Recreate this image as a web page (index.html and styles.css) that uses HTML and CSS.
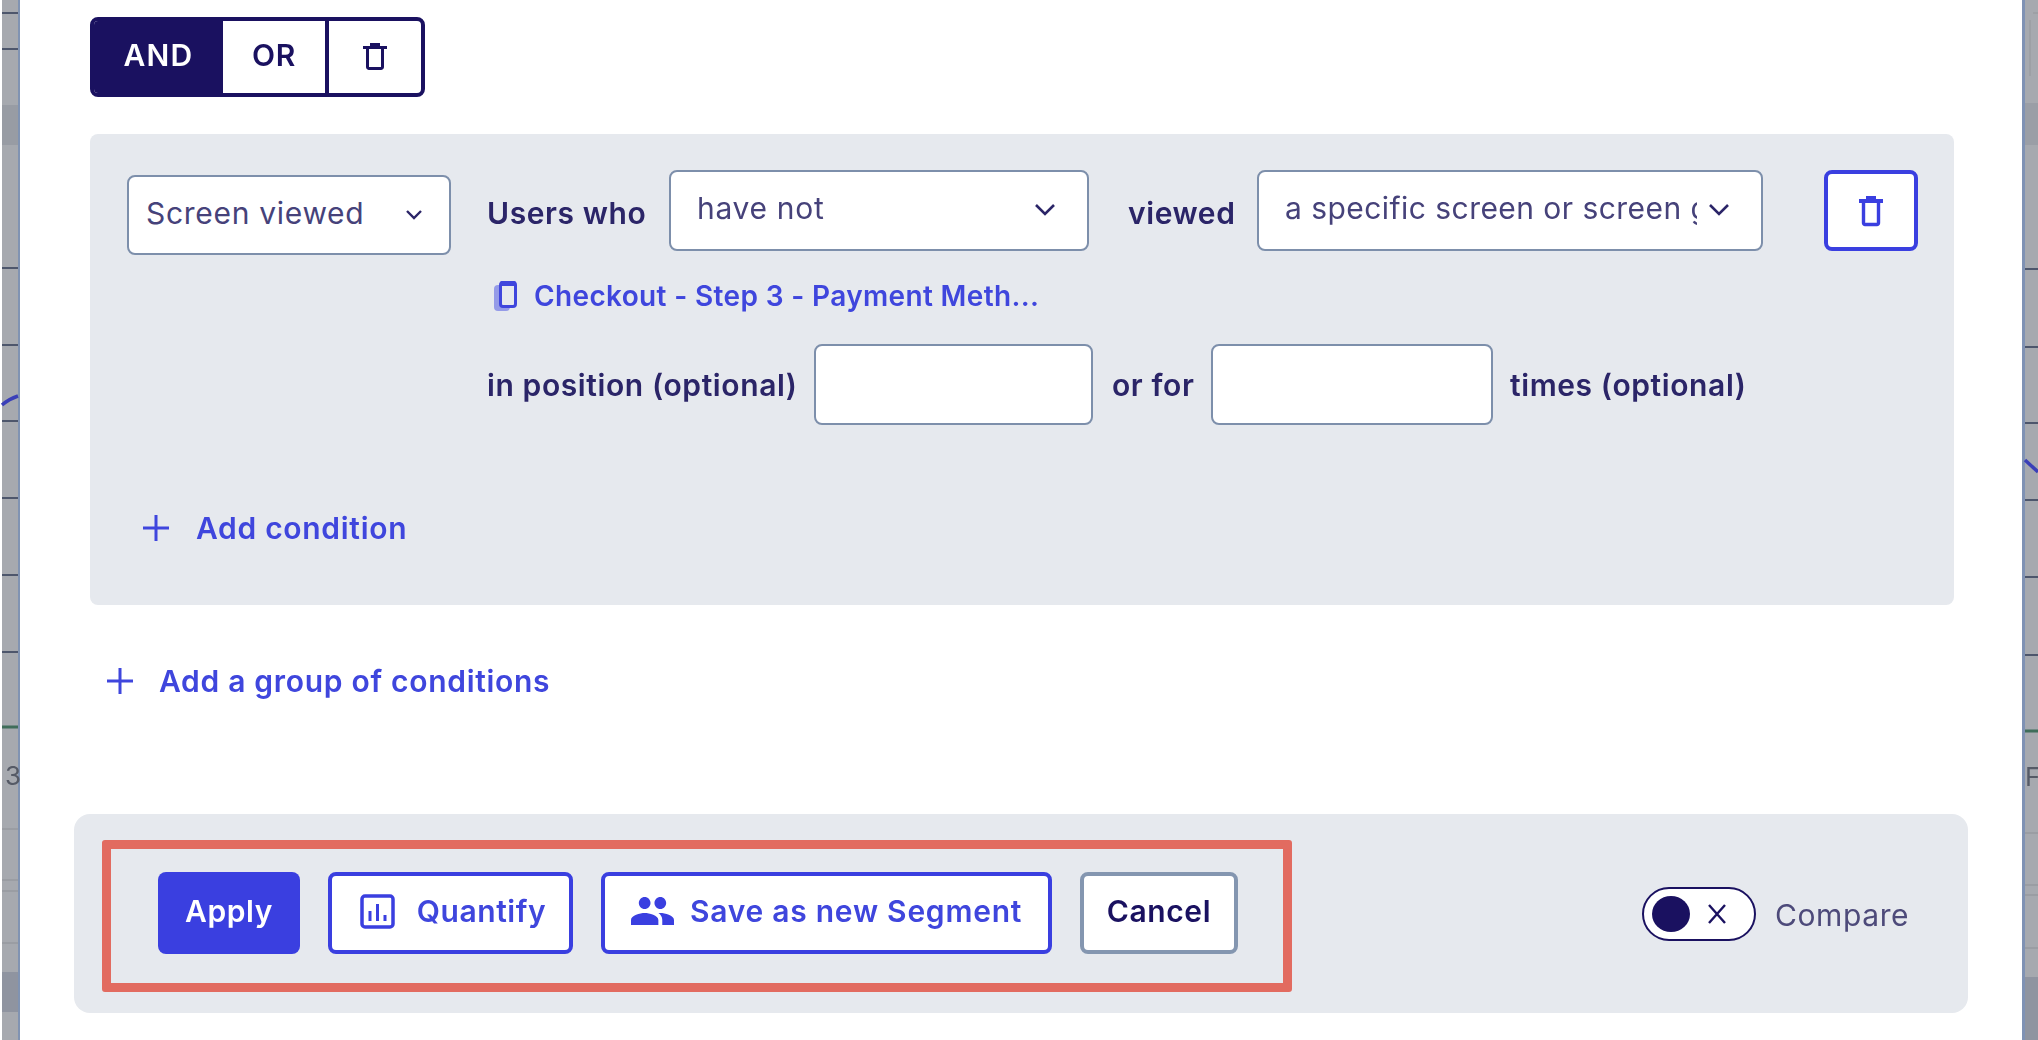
FILE: index.html
```html
<!DOCTYPE html>
<html lang="en">
<head>
<meta charset="utf-8">
<title>Segment builder</title>
<link rel="stylesheet" href="styles.css">
</head>
<body>
<div class="page">
  <svg class="strip strip-left" viewBox="0 0 20 1040" aria-hidden="true">
    <rect x="2" width="16" height="1040" fill="#a6a9af"/>
    <rect x="2" y="105" width="16" height="40" fill="#989ca4"/>
    <rect x="2" y="972" width="16" height="40" fill="#8f94a0"/>
    <rect x="18" width="2" height="1040" fill="#8093b2"/>
    <g stroke="#4d566c" stroke-width="2">
      <path d="M2 13H18M2 49H18M2 268H18M2 345H18M2 421H18M2 498H18M2 575H18M2 652H18"/>
    </g>
    <path d="M2 405Q9 399 18 396" stroke="#3a3fb8" stroke-width="3.5" fill="none"/>
    <path d="M2 727H18" stroke="#3f6d5a" stroke-width="3"/>
    <path d="M2 829H18M2 880H18M2 891H18M2 943H18" stroke="#8e9197" stroke-width="1"/>
    <text x="5" y="785" class="strip-text">3</text>
  </svg>

  <main class="modal">
    <div class="logic">
      <span class="logic-item logic-on">AND</span>
      <span class="logic-item logic-or">OR</span>
      <span class="logic-item logic-del">
        <svg class="trash-s" viewBox="0 0 24 28"><path d="M7 1h10v3H7zM0 4h24v3H0z" fill="#1a1160"/><path d="M4.5 7v18a1.5 1.5 0 0 0 1.5 1.5h12a1.5 1.5 0 0 0 1.5-1.5V7" fill="none" stroke="#1a1160" stroke-width="3"/></svg>
      </span>
    </div>

    <section class="group">
      <div class="cond">
        <div class="sel sel-type">
          <span class="sel-text">Screen viewed</span>
          <svg class="chev-s" viewBox="0 0 18 12"><path d="M2 2l7 7 7-7" fill="none" stroke="#2b2568" stroke-width="2.4"/></svg>
        </div>
        <div class="cond-main">
          <div class="row row-top">
            <span class="label l-users">Users who</span>
            <div class="sel sel-have">
              <span class="sel-text">have not</span>
              <svg class="chev" viewBox="0 0 22 14"><path d="M2 2l9 9 9-9" fill="none" stroke="#2b2568" stroke-width="2.6"/></svg>
            </div>
            <span class="label l-viewed">viewed</span>
            <div class="sel sel-what">
              <span class="sel-text clip">a specific screen or screen group</span>
              <svg class="chev" viewBox="0 0 22 14"><path d="M2 2l9 9 9-9" fill="none" stroke="#2b2568" stroke-width="2.6"/></svg>
            </div>
            <button class="del-btn" aria-label="Delete">
              <svg class="trash" viewBox="0 0 24 32"><path d="M7 1h10v3H7zM0 4h24v4H0z" fill="#3a3fe0"/><path d="M4.5 8v20a1.5 1.5 0 0 0 1.5 1.5h12a1.5 1.5 0 0 0 1.5-1.5V8" fill="none" stroke="#3a3fe0" stroke-width="3.4"/></svg>
            </button>
          </div>
          <div class="screen-link">
            <svg class="phone" viewBox="0 0 23 30"><rect x="0" y="4" width="16" height="26" rx="4" fill="#959be8"/><rect x="6.5" y="1.5" width="15" height="24" rx="2.5" fill="#e6e9ee" stroke="#3f46dd" stroke-width="3"/><rect x="6" y="0" width="16" height="5" rx="2" fill="#3f46dd"/></svg>
            <span>Checkout - Step 3 - Payment Meth...</span>
          </div>
          <div class="row row-pos">
            <span class="label l-pos">in position (optional)</span>
            <div class="field f-pos"></div>
            <span class="label l-orfor">or for</span>
            <div class="field f-times"></div>
            <span class="label l-times">times (optional)</span>
          </div>
        </div>
      </div>
      <a class="add add-cond">
        <svg class="plus" viewBox="0 0 28 28"><path d="M14 1v26M1 14h26" stroke="#3f46dd" stroke-width="3"/></svg>
        <span>Add condition</span>
      </a>
    </section>

    <a class="add add-group">
      <svg class="plus" viewBox="0 0 28 28"><path d="M14 1v26M1 14h26" stroke="#3f46dd" stroke-width="3"/></svg>
      <span>Add a group of conditions</span>
    </a>

    <footer class="footer">
      <div class="actions">
        <button class="btn btn-apply">Apply</button>
        <button class="btn btn-line btn-quant">
          <svg class="ic-chart" viewBox="0 0 35 35"><rect x="2" y="2" width="31" height="31" rx="3" fill="none" stroke="#3a3fe0" stroke-width="3.5"/><path d="M10 17v10M17.5 10v17M25 21v6" stroke="#3a3fe0" stroke-width="3"/></svg>
          <span>Quantify</span>
        </button>
        <button class="btn btn-line btn-save">
          <svg class="ic-people" viewBox="1 5 22 14" preserveAspectRatio="none"><path fill="#3a3fe0" d="M16 11c1.66 0 2.99-1.34 2.99-3S17.66 5 16 5c-1.66 0-3 1.34-3 3s1.34 3 3 3zm-8 0c1.66 0 2.99-1.34 2.99-3S9.66 5 8 5C6.34 5 5 6.34 5 8s1.34 3 3 3zm0 2c-2.33 0-7 1.17-7 3.5V19h14v-2.5c0-2.33-4.67-3.5-7-3.5zm8 0c-.29 0-.62.02-.97.05 1.16.84 1.97 1.97 1.97 3.45V19h6v-2.5c0-2.33-4.67-3.5-7-3.5z"/></svg>
          <span>Save as new Segment</span>
        </button>
        <button class="btn btn-cancel">Cancel</button>
      </div>
      <div class="compare">
        <span class="toggle"><span class="knob"></span><svg class="toggle-x" viewBox="0 0 20 22"><path d="M2 2l16 18M18 2L2 20" fill="none" stroke="#1a1160" stroke-width="2.4"/></svg></span>
        <span class="compare-label">Compare</span>
      </div>
    </footer>
  </main>

  <svg class="strip strip-right" viewBox="0 0 16 1040" aria-hidden="true">
    <rect x="3" width="13" height="1040" fill="#a6a9af"/>
    <rect x="3" y="103" width="13" height="42" fill="#9a9ea6"/>
    <rect x="3" y="977" width="13" height="63" fill="#8f94a0"/>
    <rect width="3" height="1040" fill="#7f92b4"/>
    <path d="M11 13H16M8 20V76" stroke="#9a9da3" stroke-width="1.5" fill="none"/>
    <path d="M3 269H16M3 347H16M3 423H16M3 500H16M3 577H16M3 655H16" stroke="#4d566c" stroke-width="2"/>
    <path d="M3 460L16 472" stroke="#3a3fb8" stroke-width="3.5"/>
    <path d="M3 731H16" stroke="#3f6d5a" stroke-width="3"/>
    <path d="M3 833H16M3 885H16M3 895H16M3 948H16" stroke="#8e9197" stroke-width="1"/>
    <text x="3" y="786" class="strip-text">Fe</text>
  </svg>
</div>
</body>
</html>
```

FILE: styles.css
```css
* { box-sizing: border-box; }
html, body { margin: 0; padding: 0; }
body {
  width: 2038px;
  height: 1040px;
  overflow: hidden;
  background: #fff;
  font-family: "Inter", "Liberation Sans", sans-serif;
  color: #1a1160;
}
.page { display: flex; width: 2038px; height: 1040px; filter: blur(0.7px); }
.strip { display: block; flex: none; height: 1040px; }
.strip-left { width: 20px; }
.strip-right { width: 16px; }
.strip-text { font-size: 26px; fill: #555a66; font-family: "Inter", sans-serif; }

.modal { flex: 1; min-width: 0; background: #fff; padding: 17px 68px 0 70px; }

/* AND / OR */
.logic {
  display: inline-flex;
  vertical-align: top;
  width: 335px;
  height: 80px;
  border: 4px solid #1a1160;
  border-radius: 8px;
  overflow: hidden;
  background: #fff;
  font-size: 30px;
  font-weight: 600;
  letter-spacing: 0.6px;
}
.logic-item { display: flex; align-items: center; justify-content: center; padding-bottom: 5px; }
.logic-on { width: 129px; background: #1a1160; color: #fff; letter-spacing: 1.2px; }
.logic-or { width: 106px; border-right: 4px solid #1a1160; }
.logic-del { flex: 1; padding-bottom: 0; }
.trash-s { width: 24px; height: 28px; margin-top: -2px; }

/* Group panel */
.group {
  height: 471px;
  margin-top: 37px;
  padding: 36px 36px 0 37px;
  background: #e6e9ee;
  border-radius: 8px;
}
.cond { display: flex; gap: 36px; height: 322px; }
.cond-main { flex: 1; min-width: 0; }
.row { display: flex; align-items: center; }
.row-top { height: 81px; }
.label { flex: none; font-size: 30px; font-weight: 600; letter-spacing: 0.6px; color: #2b2568; white-space: nowrap; }

.sel {
  display: flex;
  align-items: center;
  justify-content: space-between;
  background: #fff;
  border: 2px solid #7d8fab;
  border-radius: 8px;
  color: #46427a;
  font-size: 30px;
  letter-spacing: 0.7px;
}
.sel-text { white-space: nowrap; }
.sel-type { flex: none; width: 324px; height: 80px; padding: 0 26px 4px 17px; margin-top: 5px; }
.chev-s { width: 18px; height: 12px; flex: none; margin-top: 4px; }
.chev { width: 22px; height: 14px; flex: none; margin-top: 4px; }
.row-top .label { padding-top: 4px; }
.l-users { width: 182px; }
.sel-have { flex: none; width: 420px; height: 81px; padding: 0 31px 6px 26px; }
.l-viewed { margin-left: 39px; width: 129px; }
.sel-what { flex: none; width: 506px; height: 81px; padding: 0 31px 6px 26px; }
.clip { flex: none; width: 412px; overflow: hidden; letter-spacing: 0.45px; }
.del-btn {
  display: flex;
  align-items: center;
  justify-content: center;
  flex: none;
  width: 94px;
  height: 81px;
  margin-left: 61px;
  padding: 0;
  background: #fff;
  border: 4px solid #3a3fe0;
  border-radius: 8px;
}
.trash { width: 24px; height: 32px; }

.screen-link {
  display: flex;
  align-items: center;
  gap: 17px;
  height: 93px;
  padding: 0 0 3px 7px;
  color: #3f46dd;
  font-size: 28px;
  font-weight: 600;
  letter-spacing: 0.35px;
  white-space: nowrap;
}
.phone { width: 23px; height: 30px; flex: none; }
.row-pos { height: 81px; }
.field { flex: none; height: 81px; background: #fff; border: 2px solid #7d8fab; border-radius: 8px; }
.l-pos { width: 307px; }
.f-pos { width: 279px; margin-left: 20px; }
.l-orfor { width: 81px; margin-left: 19px; }
.f-times { width: 282px; margin-left: 18px; }
.l-times { margin-left: 17px; }

/* Add links */
.add {
  display: flex;
  align-items: center;
  color: #3f46dd;
  font-size: 30px;
  font-weight: 600;
  letter-spacing: 0.7px;
  white-space: nowrap;
}
.plus { width: 28px; height: 28px; flex: none; }
.add-cond { gap: 26px; margin: 18px 0 0 15px; height: 36px; }
.add-group { gap: 25px; margin: 56px 0 0 16px; height: 40px; }

/* Footer */
.footer {
  display: flex;
  align-items: center;
  justify-content: space-between;
  width: 1894px;
  height: 199px;
  margin: 113px 0 0 -16px;
  padding: 0 57px 0 28px;
  background: #e6e9ee;
  border-radius: 16px;
}
.actions {
  display: flex;
  align-items: center;
  gap: 28px;
  height: 152px;
  margin-bottom: -4px;
  padding: 0 45px 6px 47px;
  border: 9px solid #e26b60;
  border-radius: 3px;
}
.btn {
  display: flex;
  align-items: center;
  justify-content: center;
  height: 82px;
  padding: 0 0 3px;
  border-radius: 8px;
  font-family: inherit;
  font-size: 30px;
  font-weight: 600;
  letter-spacing: 0.6px;
  white-space: nowrap;
}
.btn-apply { width: 142px; background: #3a3fe0; color: #fff; border: 0; }
.btn-line { background: #fff; border: 4px solid #3a3fe0; color: #3f46dd; }
.btn-quant { width: 245px; gap: 22px; padding-left: 5px; }
.btn-save { width: 451px; gap: 16px; letter-spacing: 0.75px; }
.btn-cancel { width: 158px; background: #fff; border: 4px solid #8496b0; color: #1a1160; }
.ic-chart { width: 35px; height: 35px; flex: none; }
.ic-people { width: 43px; height: 28px; flex: none; }

.compare { display: flex; align-items: center; gap: 19px; width: 269px; }
.toggle {
  display: flex;
  align-items: center;
  gap: 17px;
  flex: none;
  width: 114px;
  height: 54px;
  padding-left: 8px;
  background: #fff;
  border: 2px solid #1a1160;
  border-radius: 27px;
}
.knob { width: 38px; height: 36px; flex: none; background: #1a1160; border-radius: 50%; }
.toggle-x { width: 20px; height: 22px; flex: none; }
.compare-label { padding-top: 3px; font-size: 30px; letter-spacing: 0.6px; color: #4d4a7a; }
```
